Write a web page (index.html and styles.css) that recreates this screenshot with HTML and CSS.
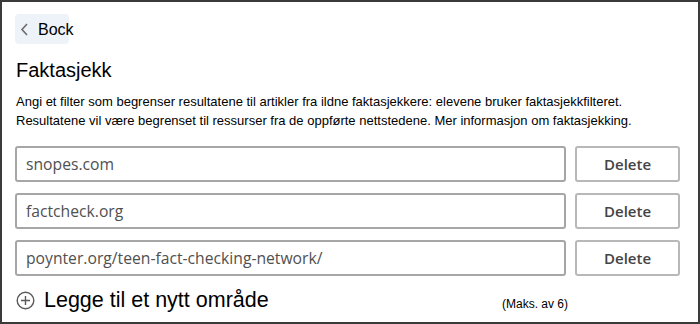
FILE: index.html
```html
<!DOCTYPE html>
<html lang="no">
<head>
<meta charset="utf-8">
<title>Faktasjekk</title>
<link rel="stylesheet" href="styles.css">
</head>
<body>
<div class="frame">
  <button class="back" type="button">
    <svg class="chev" width="9" height="13" viewBox="0 0 9 13"><path d="M7 1 L2 6.5 L7 12" fill="none" stroke="#6b6b6b" stroke-width="1.6"/></svg>
    <span>Bock</span>
  </button>
  <h1 class="title">Faktasjekk</h1>
  <p class="desc">Angi et filter som begrenser resultatene til artikler fra ildne faktasjekkere: elevene bruker faktasjekkfilteret.<br>Resultatene vil være begrenset til ressurser fra de oppførte nettstedene. Mer informasjon om faktasjekking.</p>
  <div class="rows">
    <div class="row"><div class="field">snopes.com</div><button class="del" type="button">Delete</button></div>
    <div class="row"><div class="field">factcheck.org</div><button class="del" type="button">Delete</button></div>
    <div class="row"><div class="field">poynter.org/teen-fact-checking-network/</div><button class="del" type="button">Delete</button></div>
  </div>
  <div class="foot">
    <div class="add">
      <svg class="plus" width="19" height="19" viewBox="0 0 19 19"><circle cx="9.5" cy="9.5" r="8.3" fill="none" stroke="#5a5a5a" stroke-width="1.4"/><path d="M9.5 5 V14 M5 9.5 H14" stroke="#5a5a5a" stroke-width="1.4"/></svg>
      <span>Legge til et nytt område</span>
    </div>
    <span class="max">(Maks. av 6)</span>
  </div>
</div>
</body>
</html>
```
FILE: styles.css
```css
html, body { margin: 0; padding: 0; background: #fff; }
.frame {
  box-sizing: border-box;
  width: 700px;
  height: 324px;
  border: 2px solid #3a3a3a;
  padding: 12px 18px 0 13px;
  font-family: "Liberation Sans", Arial, sans-serif;
  color: #000;
}
.back {
  display: flex;
  align-items: center;
  gap: 9px;
  width: 54px;
  height: 30px;
  padding: 0 0 0 5px;
  border: 0;
  border-radius: 4px;
  background: #eef3fa;
  font-family: "Liberation Sans", Arial, sans-serif;
  font-size: 16px;
  color: #000;
  overflow: visible;
  white-space: nowrap;
}
.back span { position: relative; top: 1px; }
.chev { flex: none; }
.title {
  margin: 14px 0 0 1px;
  font-size: 20px;
  font-weight: normal;
  line-height: 24px;
}
.desc {
  margin: 10px 0 0 1px;
  font-size: 13px;
  line-height: 19px;
}
.rows {
  margin-top: 16px;
  display: flex;
  flex-direction: column;
  gap: 11px;
}
.row {
  display: flex;
  gap: 9px;
}
.field {
  box-sizing: border-box;
  width: 552px;
  height: 36px;
  border: 2px solid #a6a6a6;
  border-radius: 3px;
  padding: 0 9px;
  display: flex;
  align-items: center;
  font-family: "Open Sans", "Noto Sans", sans-serif;
  font-size: 15.7px;
  color: #505050;
}
.del {
  box-sizing: border-box;
  width: 105px;
  height: 36px;
  border: 2px solid #b8b8b8;
  border-radius: 3px;
  background: #fff;
  font-family: "Open Sans", "Noto Sans", sans-serif;
  font-weight: 600;
  font-size: 15px;
  color: #444;
  padding: 0;
}
.foot {
  margin-top: 12px;
  width: 553px;
  display: flex;
  justify-content: space-between;
  align-items: center;
}
.add {
  display: flex;
  align-items: center;
  gap: 9px;
  font-size: 21.5px;
  padding-left: 1px;
}
.max {
  font-size: 12px;
  margin-top: 6px;
}
```
